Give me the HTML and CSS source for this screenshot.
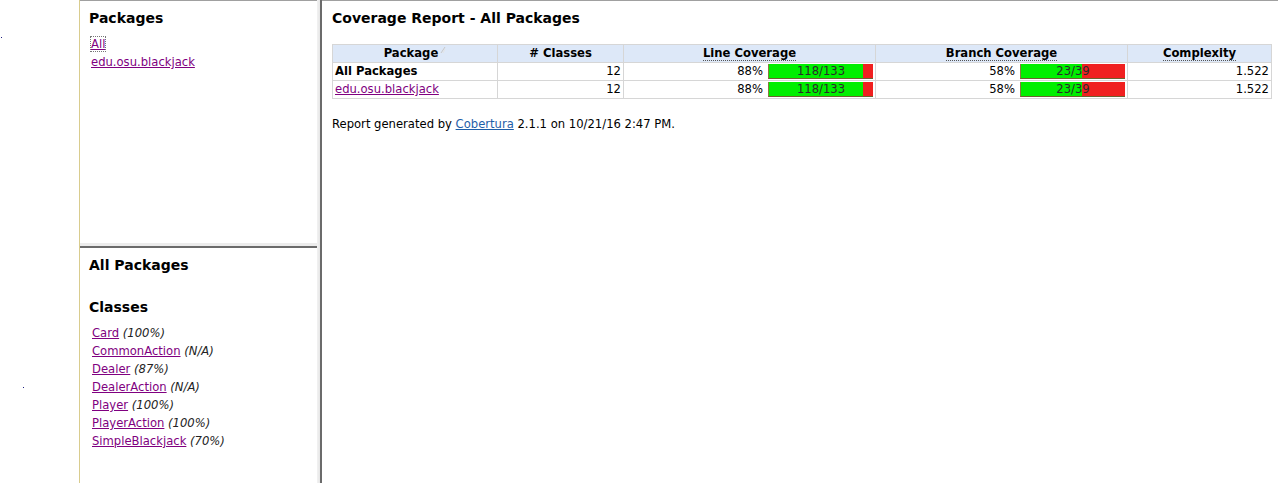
FILE: index.html
```html
<!DOCTYPE html>
<html>
<head>
<meta charset="utf-8">
<title>Coverage Report</title>
<link rel="stylesheet" href="styles.css">
</head>
<body>
<div class="gutter"><span class="dot dot-a"></span><span class="dot dot-b"></span></div>
<div class="nav">
  <div class="nav-top">
    <h1 class="title">Packages</h1>
    <ul class="pkg-list">
      <li><a href="#" class="focused">All</a></li>
      <li><a href="#">edu.osu.blackjack</a></li>
    </ul>
  </div>
  <div class="hsplit"></div>
  <div class="nav-bottom">
    <h1 class="title">All Packages</h1>
    <h1 class="title classes-title">Classes</h1>
    <ul class="class-list">
      <li><a href="#">Card</a> <i>(100%)</i></li>
      <li><a href="#">CommonAction</a> <i>(N/A)</i></li>
      <li><a href="#">Dealer</a> <i>(87%)</i></li>
      <li><a href="#">DealerAction</a> <i>(N/A)</i></li>
      <li><a href="#">Player</a> <i>(100%)</i></li>
      <li><a href="#">PlayerAction</a> <i>(100%)</i></li>
      <li><a href="#">SimpleBlackjack</a> <i>(70%)</i></li>
    </ul>
  </div>
</div>
<div class="vsplit"></div>
<div class="main">
  <h1 class="title">Coverage Report - All Packages</h1>
  <table class="report">
    <colgroup>
      <col class="c-pkg"><col class="c-cls"><col class="c-cov"><col class="c-cov"><col>
    </colgroup>
    <thead>
      <tr>
        <th>Package <svg class="sort" width="6" height="8" viewBox="0 0 6 8"><path d="M1 7 L5 1" stroke="#c8c8c8" stroke-width="1" fill="none"/><path d="M3 7 L5 3" stroke="#e4e4e4" stroke-width="1" fill="none"/></svg></th>
        <th># Classes</th>
        <th><span class="hint">Line Coverage</span></th>
        <th><span class="hint">Branch Coverage</span></th>
        <th><span class="hint">Complexity</span></th>
      </tr>
    </thead>
    <tbody>
      <tr>
        <td class="name"><b>All Packages</b></td>
        <td class="num">12</td>
        <td><div class="cov"><span>88%</span><div class="bar"><div class="green" style="width:94px"></div><span class="bar-text">118/133</span></div></div></td>
        <td><div class="cov"><span>58%</span><div class="bar"><div class="green" style="width:61px"></div><span class="bar-text">23/39</span></div></div></td>
        <td class="num">1.522</td>
      </tr>
      <tr>
        <td class="name"><a href="#">edu.osu.blackjack</a></td>
        <td class="num">12</td>
        <td><div class="cov"><span>88%</span><div class="bar"><div class="green" style="width:94px"></div><span class="bar-text">118/133</span></div></div></td>
        <td><div class="cov"><span>58%</span><div class="bar"><div class="green" style="width:61px"></div><span class="bar-text">23/39</span></div></div></td>
        <td class="num">1.522</td>
      </tr>
    </tbody>
  </table>
  <p class="footer">Report generated by <a href="#" class="ext">Cobertura</a> 2.1.1 on 10/21/16 2:47 PM.</p>
</div>
</body>
</html>
```
FILE: styles.css
```css
html, body {
  margin: 0;
  padding: 0;
  background: #fff;
}
body {
  display: flex;
  height: 483px;
  overflow: hidden;
  font-family: Verdana, "DejaVu Sans", sans-serif;
  font-size: 11.6px;
  color: #000;
}
.gutter {
  width: 79px;
  flex: none;
  border-right: 1px solid #d9cc8e;
  position: relative;
}
.dot {
  position: absolute;
  width: 1px;
  height: 1px;
  background: #202080;
}
.dot-a { left: 1px; top: 37px; }
.dot-b { left: 23px; top: 387px; }

.nav {
  width: 237px;
  flex: none;
  display: flex;
  flex-direction: column;
  border-top: 1px solid #a0a0a0;
}
.nav-top {
  height: 242px;
  padding-left: 9px;
}
.hsplit {
  height: 5px;
  flex: none;
  background: linear-gradient(#ececec 0, #ececec 3px, #6b6b6b 3px, #6b6b6b 5px);
}
.nav-bottom {
  flex: 1;
  padding-left: 9px;
}
.vsplit {
  width: 5px;
  flex: none;
  background: linear-gradient(to right, #f2f2f2 0, #e6e6e6 3px, #6b6b6b 3px, #6b6b6b 5px);
}
.main {
  flex: 1;
  min-width: 0;
  border-top: 1px solid #a0a0a0;
  padding: 0 6px 0 10px;
}

.title {
  font-size: 14px;
  font-weight: bold;
  line-height: 16px;
  margin: 9px 0 0;
}
.nav-bottom .title { margin-top: 9px; }
.nav-bottom .classes-title { margin-top: 26px; }

ul {
  list-style: none;
  margin: 0;
  padding: 0;
}
li { line-height: 18px; }
.pkg-list { margin-top: 9px; padding-left: 2px; }
.class-list { margin-top: 9px; padding-left: 3px; }

a { color: #800080; }
a.ext { color: #1f5ea8; }
a.focused { outline: 1px dotted #777; outline-offset: 0; }
i { color: #222; }

.report {
  margin-top: 18px;
  width: 940px;
  border-collapse: collapse;
  table-layout: fixed;
}
.c-pkg { width: 165px; }
.c-cls { width: 126px; }
.c-cov { width: 252px; }
.report th, .report td {
  border: 1px solid #d6d6d6;
  height: 17px;
  line-height: 17px;
  padding: 0 2px;
  white-space: nowrap;
  overflow: hidden;
  color: #000;
}
.report th {
  background: #dde8f8;
  font-weight: bold;
  text-align: center;
}
.report td.num { text-align: right; }
.report td.name a { color: #800080; }
.hint { border-bottom: 1px dotted #555; }
.sort { vertical-align: 3px; margin-left: -2px; }

.cov {
  display: flex;
  justify-content: flex-end;
  align-items: center;
  gap: 5px;
  padding-right: 0;
}
.bar {
  position: relative;
  width: 105px;
  height: 15px;
  background: #f02020;
  border-left: 1px solid #8a7a40;
  border-bottom: 1px solid #6e6030;
  box-sizing: border-box;
}
.green {
  height: 100%;
  background: #00ef00;
}
.bar-text {
  position: absolute;
  left: 0;
  right: 0;
  top: 0;
  line-height: 14px;
  text-align: center;
  color: #2a2a2a;
}
.footer {
  margin: 16px 0 0;
  line-height: 18px;
}
```
